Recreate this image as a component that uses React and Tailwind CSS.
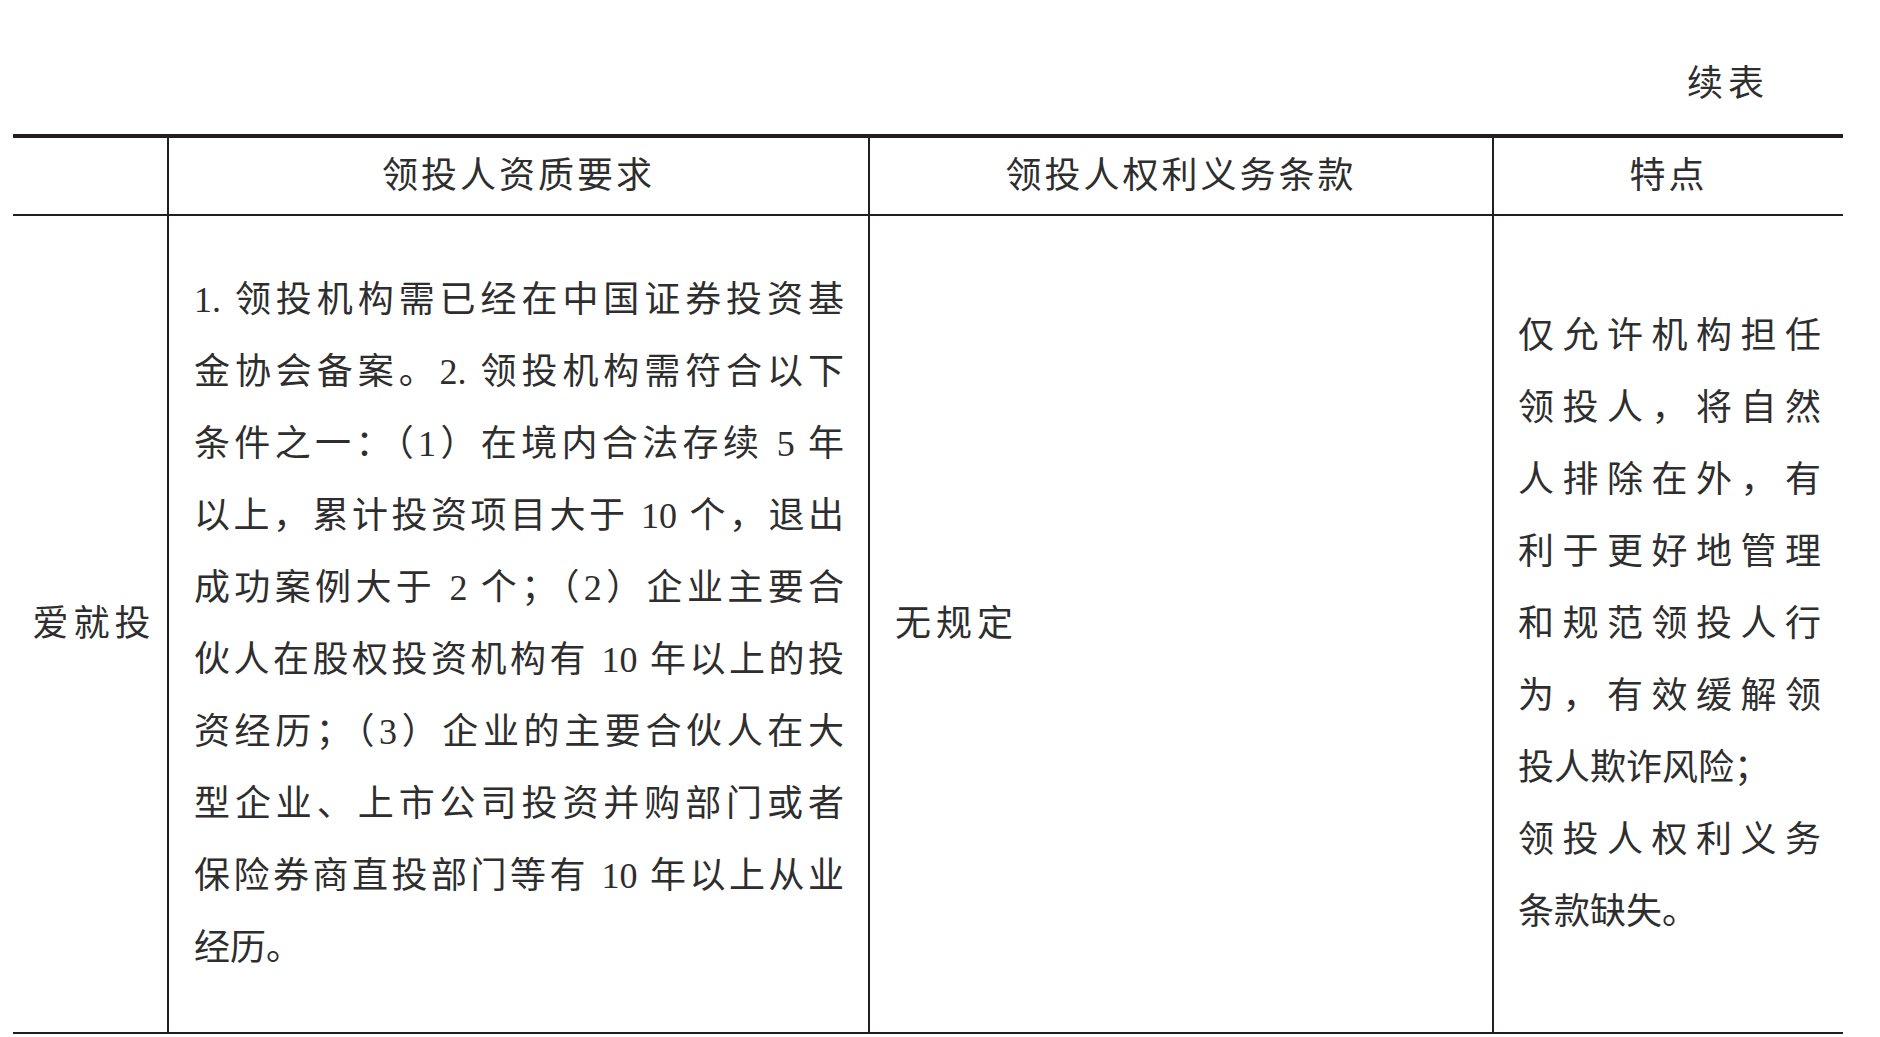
import React from 'react';

const qualLines = [
  '1. 领投机构需已经在中国证券投资基',
  '金协会备案。2. 领投机构需符合以下',
  '条件之一：（1）在境内合法存续 5 年',
  '以上，累计投资项目大于 10 个，退出',
  '成功案例大于 2 个；（2）企业主要合',
  '伙人在股权投资机构有 10 年以上的投',
  '资经历；（3）企业的主要合伙人在大',
  '型企业、上市公司投资并购部门或者',
  '保险券商直投部门等有 10 年以上从业',
];

const featLines = [
  { t: '仅允许机构担任', j: true },
  { t: '领投人，将自然', j: true },
  { t: '人排除在外，有', j: true },
  { t: '利于更好地管理', j: true },
  { t: '和规范领投人行', j: true },
  { t: '为，有效缓解领', j: true },
  { t: '投人欺诈风险；', j: false },
  { t: '领投人权利义务', j: true },
  { t: '条款缺失。', j: false },
];

export default function App() {
  return (
    <div
      lang="zh-CN"
      className="min-h-screen bg-white text-[#2e2e2e] pt-[48px] pl-[13px]"
      style={{ fontFamily: '"Liberation Serif", "Noto Sans CJK SC", serif' }}
    >
      <div className="w-[1830px]">
        {/* 续表 */}
        <div className="flex justify-end pr-[74px] h-[72px] leading-[72px] text-[36px] tracking-[5px] mb-[14px]">
          续表
        </div>

        {/* 表格 */}
        <div className="border-t-[4px] border-b-2 border-[#231f20]">
          {/* 表头 */}
          <div className="grid grid-cols-[154px_701px_624px_351px] h-[78px] border-b-2 border-[#231f20] text-[36px] tracking-[3px]">
            <div />
            <div className="border-l-2 border-[#231f20] flex items-center justify-center">领投人资质要求</div>
            <div className="border-l-2 border-[#231f20] flex items-center justify-center">领投人权利义务条款</div>
            <div className="border-l-2 border-[#231f20] flex items-center justify-center">特点</div>
          </div>

          {/* 内容 */}
          <div className="grid grid-cols-[154px_701px_624px_351px] h-[816px] text-[36px] leading-[72px]">
            <div className="flex items-center justify-center tracking-[5px] pl-[8px]">爱就投</div>
            <div className="border-l-2 border-[#231f20] flex flex-col justify-center pl-[25px] pr-[24px]">
              {qualLines.map((l, i) => (
                <div key={i} className="text-justify [text-align-last:justify]">{l}</div>
              ))}
              <div>经历。</div>
            </div>
            <div className="border-l-2 border-[#231f20] flex items-center pl-[25px] tracking-[5px]">无规定</div>
            <div className="border-l-2 border-[#231f20] flex flex-col justify-center pl-[24px] pr-[22px]">
              {featLines.map((l, i) => (
                <div
                  key={i}
                  className={l.j ? 'text-justify [text-align-last:justify]' : ''}
                >
                  {l.t}
                </div>
              ))}
            </div>
          </div>
        </div>
      </div>
    </div>
  );
}
